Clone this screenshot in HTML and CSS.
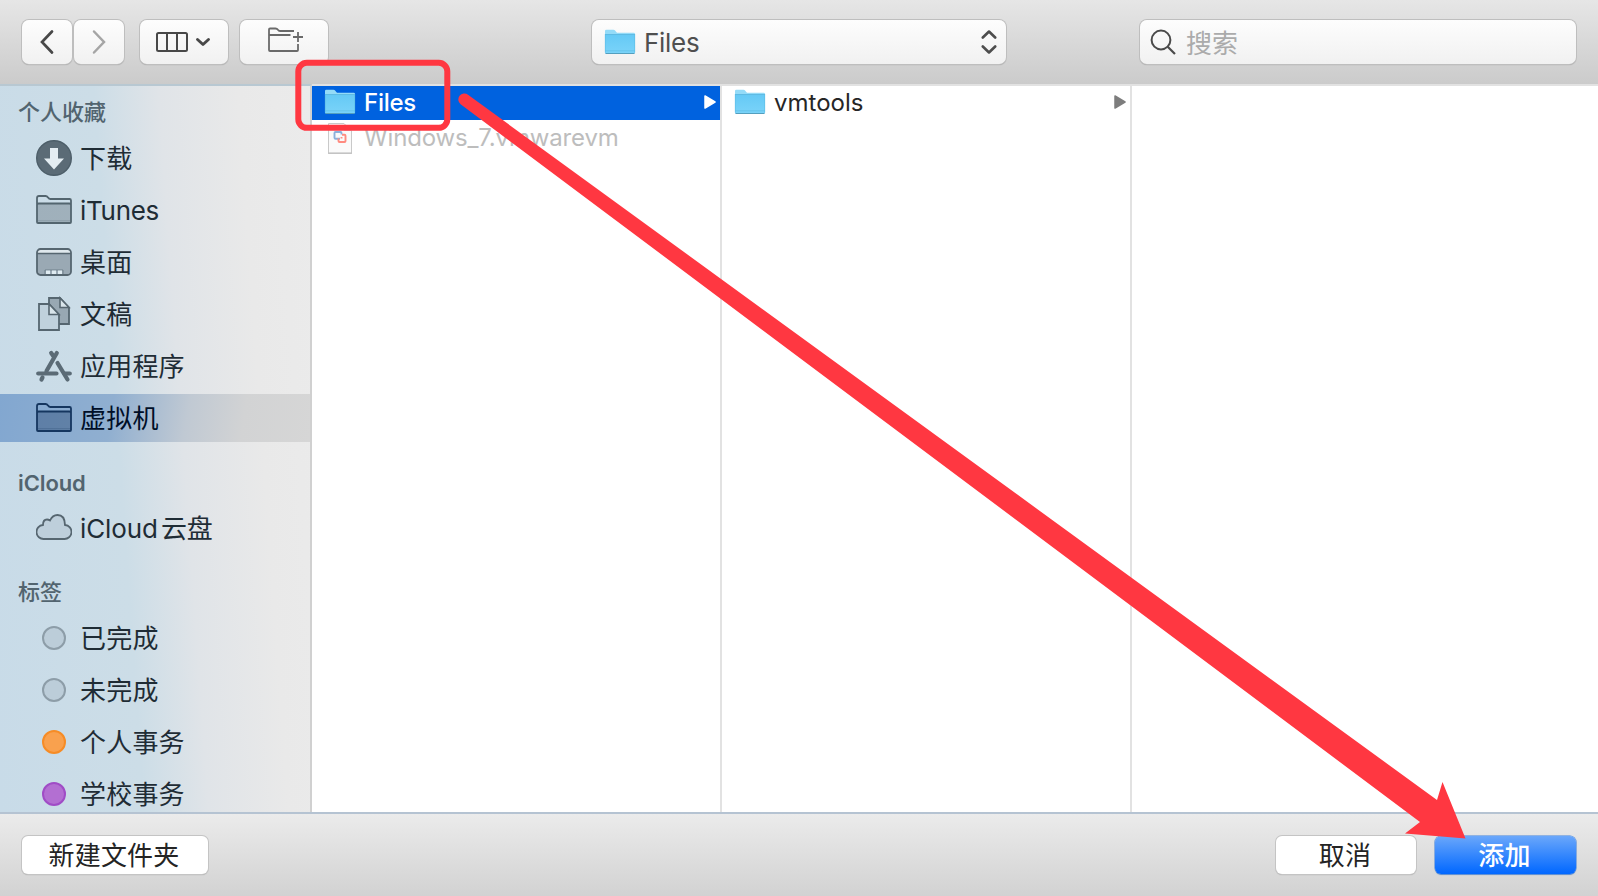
FILE: index.html
```html
<!DOCTYPE html>
<html lang="zh-CN">
<head>
<meta charset="utf-8">
<title>Files</title>
<link rel="stylesheet" href="styles.css">
</head>
<body>
<svg class="defs" width="0" height="0">
  <defs>
    <linearGradient id="blue" x1="0" y1="0" x2="0" y2="1"><stop offset="0" stop-color="#65c9f5"/><stop offset="1" stop-color="#7ad3f9"/></linearGradient>
    <symbol id="folder" viewBox="0 0 32 26">
      <path d="M1 24V2Q1 .8 2.200 .8H9.500Q10.500 .8 11.300 1.800L12.500 3.200Q13 3.700 14 3.700H29.800Q31 3.700 31 5V24Z" fill="#94dbf8"/>
      <path d="M1 5.500H31V23.600Q31 24.500 30 24.500H2Q1 24.500 1 23.600Z" fill="url(#blue)"/>
      <path d="M1 5.500H31" stroke="#58b5de" stroke-width=".8"/>
      <path d="M1.300 5V23.500M30.700 5V23.500M1 21.800H31" stroke="#5dbbe3" stroke-width=".6"/>
      <path d="M1.500 24.500H30.500" stroke="#549fbe" stroke-width="1"/>
    </symbol>
    <symbol id="side-folder" viewBox="0 0 36 30">
      <path d="M1 9H35V28H1Z" fill="currentColor" opacity=".36"/>
      <path d="M1 27V3Q1 1 3 1H9.500Q11 1 12 2.500Q13 4 14.500 4H33.500Q35 4 35 5.500V27Q35 28 34 28H2Q1 28 1 27ZM1 10Q1 8.500 2.500 8.500H33.500Q35 8.500 35 10" fill="none" stroke="currentColor" stroke-width="1.800"/>
      <path d="M2 25.700H34" stroke="currentColor" stroke-width=".6" opacity=".4"/>
    </symbol>
  </defs>
</svg>
<div class="dialog">
  <header class="toolbar">
    <div class="nav">
      <button class="tool nav-btn"><svg width="16" height="26" viewBox="0 0 16 26"><path d="M13 2.500L3 13L13 23.500" fill="none" stroke="#484848" stroke-width="2.700" stroke-linecap="round"/></svg></button>
      <button class="tool nav-btn"><svg width="16" height="26" viewBox="0 0 16 26"><path d="M3 2.500L13 13L3 23.500" fill="none" stroke="#a5a5a5" stroke-width="2.500" stroke-linecap="round"/></svg></button>
    </div>
    <button class="tool view"><svg width="56" height="24" viewBox="0 0 56 24"><rect x="2" y="3" width="30" height="18" rx="1.500" fill="none" stroke="#484848" stroke-width="2"/><path d="M12 3V21M22 3V21" stroke="#484848" stroke-width="2"/><path d="M42.500 9.500L48 14.500L53.500 9.500" fill="none" stroke="#484848" stroke-width="2.900" stroke-linecap="round" stroke-linejoin="round"/></svg></button>
    <button class="tool create"><svg width="36" height="26" viewBox="0 0 36 26"><path d="M31 17V23Q31 24 30 24H3Q2 24 2 23V2.500Q2 1.500 3 1.500H8.500Q10 1.500 11 2.800Q12 4 13.500 4H27M2 8H23.500M31 5V15M26 10H36" fill="none" stroke="#6a6a6a" stroke-width="1.800"/></svg></button>
    <div class="tool popup">
      <svg width="32" height="26"><use href="#folder"/></svg>
      <span class="popup-name">Files</span>
      <svg class="updown" width="16" height="26" viewBox="0 0 16 26"><path d="M1.800 8.500L8 2.500L14.200 8.500M1.800 17.500L8 23.500L14.200 17.500" fill="none" stroke="#4d4d4d" stroke-width="2.600" stroke-linecap="round" stroke-linejoin="round"/></svg>
    </div>
    <div class="tool search">
      <svg width="27" height="27" viewBox="0 0 27 27"><circle cx="11" cy="11" r="9.400" fill="none" stroke="#4a4a4a" stroke-width="2"/><path d="M17.700 17.700L25 25" stroke="#4a4a4a" stroke-width="2.200"/></svg>
      <span>搜索</span>
    </div>
  </header>
  <main class="browser">
    <nav class="sidebar">
      <h2>个人收藏</h2>
      <ul>
        <li><svg width="36" height="36" viewBox="0 0 36 36"><circle cx="18" cy="18" r="17.300" fill="#5b6b76" stroke="#4d5e69" stroke-width="1.400"/><path d="M14 8H22V18.500H28L18 29.500L8 18.500H14Z" fill="#e4edf2"/></svg><span>下载</span></li>
        <li><svg width="36" height="30"><use href="#side-folder"/></svg><span class="latin">iTunes</span></li>
        <li><svg width="36" height="28" viewBox="0 0 36 28"><rect x="1" y="1" width="34" height="26" rx="3.500" fill="#dfe8ed"/><path d="M1 5H35V24Q35 27 32 27H4Q1 27 1 24Z" fill="#9aa9b4"/><path d="M1 5.500H35" stroke="#566670" stroke-width="1.600"/><rect x="1" y="1" width="34" height="26" rx="3.500" fill="none" stroke="#566670" stroke-width="1.800"/><path d="M9 26V22H27V26" fill="none" stroke="#71818c"/><path d="M10 22.500H14V26H10ZM16 22.500H20V26H16ZM22 22.500H26V26H22Z" fill="#dfebf1"/></svg><span>桌面</span></li>
        <li><svg width="36" height="36" viewBox="0 0 36 36"><path d="M13 2H24L33 11.500V28H13Z" fill="#98a8b3" stroke="#566670" stroke-width="1.800"/><path d="M24 2V11.500H33Z" fill="#d9e5eb" stroke="#566670" stroke-width="1.600"/><path d="M3 8H13L23 18.500V34H3Z" fill="#c0d1dc" stroke="#566670" stroke-width="1.800"/><path d="M13 8V18.500H23Z" fill="#d9e5eb" stroke="#566670" stroke-width="1.600"/></svg><span>文稿</span></li>
        <li><svg width="36" height="34" viewBox="0 0 36 34"><g fill="none" stroke="#5b6b76" stroke-width="4.200" stroke-linecap="round"><path d="M20.800 4L10.500 22M15.200 4L18 8M21.500 14L31.500 30.500M6.500 28.500L5.500 30.500"/><path d="M2.200 24.500H20.500M28.500 24.500H33.800"/></g></svg><span>应用程序</span></li>
        <li class="selected"><svg width="36" height="30"><use href="#side-folder"/></svg><span>虚拟机</span></li>
      </ul>
      <h2 class="latin">iCloud</h2>
      <ul>
        <li><svg width="36" height="26" viewBox="0 0 36 26"><path d="M8 25A7 7 0 0 1 7 11Q7 5.500 11 5.500Q12.500 5.500 14 6.500Q16.500 1 21.500 1Q28.800 1 29 11A7 7 0 0 1 28 25Z" fill="#becfdb" stroke="#566670" stroke-width="1.800"/></svg><span class="latin">iCloud<span class="drive">云盘</span></span></li>
      </ul>
      <h2 class="tags">标签</h2>
      <ul>
        <li><i class="dot"></i><span>已完成</span></li>
        <li><i class="dot"></i><span>未完成</span></li>
        <li><i class="dot orange"></i><span>个人事务</span></li>
        <li><i class="dot purple"></i><span>学校事务</span></li>
      </ul>
    </nav>
    <section class="column">
      <div class="entry active"><svg width="32" height="26"><use href="#folder"/></svg><span>Files</span><svg class="more" width="12" height="14" viewBox="0 0 12 14"><path d="M1 1L11 7L1 13Z" fill="#fff" stroke="#fff" stroke-width="1.500" stroke-linejoin="round"/></svg></div>
      <div class="entry disabled"><svg width="32" height="32" viewBox="0 0 32 32"><path d="M4.500 1.500H20L27.500 9V31H4.500Z" fill="#fafafa" stroke="#c9c9c9"/><path d="M20 1.500V9H27.500Z" fill="#ddd"/><path d="M4 31.300H28" stroke="#bbb"/><path d="M13 16.800H11.500Q10.500 16.800 10.500 15.800V11Q10.500 10 11.500 10H16.500Q17.500 10 17.500 11V12.500M13 16.800H16" fill="none" stroke="#8cb0db" stroke-width="1.900"/><path d="M18 12.800H20.500Q21.500 12.800 21.500 13.800V19Q21.500 20 20.500 20H15.500Q14.500 20 14.500 19V16.500M17.500 15V16.500" fill="none" stroke="#ff8b80" stroke-width="1.900"/></svg><span>Windows_7.vmwarevm</span></div>
    </section>
    <section class="column">
      <div class="entry"><svg width="32" height="26"><use href="#folder"/></svg><span>vmtools</span><svg class="more" width="12" height="14" viewBox="0 0 12 14"><path d="M1 1L11 7L1 13Z" fill="#7d7d7d" stroke="#7d7d7d" stroke-width="1.500" stroke-linejoin="round"/></svg></div>
    </section>
    <section class="column last"></section>
  </main>
  <footer class="actions">
    <button class="push new-folder">新建文件夹</button>
    <button class="push cancel">取消</button>
    <button class="push primary">添加</button>
  </footer>
  <svg class="annotation" width="1598" height="896" viewBox="0 0 1598 896">
    <rect x="298.300" y="62.800" width="149" height="65" rx="8.500" fill="none" stroke="#ff3741" stroke-width="6"/>
    <path d="M468 94.800L1437 800L1442.500 782L1465.500 838.500L1405 833.500L1420 822L460.600 104.200A5.600 5.600 0 0 1 468 94.800Z" fill="#ff3741"/>
  </svg>
</div>
</body>
</html>
```
FILE: styles.css
```css
* { box-sizing: border-box; }

body {
  margin: 0;
  font-family: Inter, "Noto Sans CJK SC", sans-serif;
  font-size: 26px;
  color: #262626;
}

.defs { position: absolute; }

svg { display: block; flex: none; }

.dialog {
  position: relative;
  display: flex;
  flex-direction: column;
  width: 1598px;
  height: 896px;
  overflow: hidden;
}

.toolbar {
  display: flex;
  align-items: flex-start;
  height: 84px;
  padding: 20px 22px 0;
  background: linear-gradient(#e6e6e6, #cbcbcb);
}

.tool {
  display: flex;
  align-items: center;
  justify-content: center;
  height: 44px;
  padding: 0;
  border: 0;
  border-radius: 7px;
  background: linear-gradient(#fdfdfd, #f1f1f1);
  box-shadow: 0 0 0 1px #bebebe, 0 1px 1px 0 #8e8e8e;
}

.nav { display: flex; gap: 2px; }
.nav-btn { width: 50px; }
.view { width: 88px; margin-left: 16px; padding-right: 2px; }
.create { width: 88px; margin-left: 12px; }
.create svg { margin: -4px 0 0 1px; }

.popup {
  width: 414px;
  margin-left: 264px;
  padding: 0 9px 0 12px;
  color: #4f4f4f;
}
.popup-name { flex: 1; margin-left: 8px; padding-top: 1px; letter-spacing: -.3px; }

.search {
  justify-content: flex-start;
  width: 436px;
  margin-left: 134px;
  padding-left: 10px;
  gap: 9px;
  color: #ababab;
}
.search span { padding-bottom: 2px; }

.browser {
  display: flex;
  height: 728px;
  border-top: 2px solid #e2e2e2;
}

.sidebar {
  width: 312px;
  margin-top: -2px;
  border-top: 2px solid #b8c8d2;
  border-right: 2px solid #d0d0d0;
  padding-top: 4px;
  overflow: hidden;
  color: #1f2c35;
  background: linear-gradient(86deg, #c8dbe8 0%, #ccdde7 40%, #e0e4e8 58%, #e9e9e9 80%, #ebebeb 100%);
}

.sidebar h2 {
  display: flex;
  align-items: center;
  height: 44px;
  margin: 0;
  padding: 0 0 4px 18px;
  font-size: 22px;
  font-weight: 500;
  color: #52646f;
}
.sidebar h2.latin { height: 40px; margin-top: 21px; padding-bottom: 0; font-weight: 600; letter-spacing: -.1px; }
.sidebar h2.tags { margin-top: 19px; }

.sidebar ul {
  display: flex;
  flex-direction: column;
  gap: 4px;
  margin: 0;
  padding: 0;
  list-style: none;
}

.sidebar li {
  display: flex;
  align-items: center;
  gap: 8px;
  height: 48px;
  padding-left: 36px;
  white-space: nowrap;
}
.sidebar li svg { color: #53656f; }
.sidebar li > span { padding-bottom: 3px; letter-spacing: .2px; }
.sidebar li > .latin { padding-bottom: 0; letter-spacing: -.3px; }
.sidebar li > .latin:has(.drive) { padding-bottom: 1px; letter-spacing: -.1px; }
.drive { margin-left: 3px; }

.sidebar li.selected {
  color: #000f28;
  background: linear-gradient(99deg, #82a7d0 0%, #90afd0 36%, #c0c9d3 60%, #d2d3d4 78%, #d6d6d6 100%);
}
.sidebar li.selected svg { color: #15365f; }

.dot {
  width: 24px;
  height: 24px;
  margin: 0 6px;
  border: 2px solid #8d9da8;
  border-radius: 50%;
  background: #bccdd9;
}
.dot.orange { border-color: #f68c26; background: #f9a14e; }
.dot.purple { border-color: #a04cc6; background: #b36fd2; }

.column {
  width: 410px;
  border-right: 2px solid #e2e2e2;
  background: #fff;
}
.column.last { flex: 1; border-right: 0; }

.entry {
  display: flex;
  align-items: center;
  height: 34px;
  padding: 0 4px 2px 12px;
  font-size: 24px;
}
.entry span { flex: 1; margin-left: 8px; }
.entry.active { color: #fff; background: #0062df; font-weight: 500; letter-spacing: -.25px; }
.entry.disabled { height: 36px; padding-bottom: 1px; color: #bdbdbd; letter-spacing: -.15px; }

.actions {
  display: flex;
  height: 84px;
  padding: 22px 22px 0 22px;
  border-top: 2px solid #b5c3d2;
  background: linear-gradient(#ebebeb, #d2d2d2);
}

.push {
  height: 38px;
  padding: 0 2px 0 0;
  border: 0;
  border-radius: 6px;
  font: inherit;
  letter-spacing: .2px;
  line-height: 39px;
  color: #242424;
  background: #fff;
  box-shadow: 0 0 0 1px #c4c4c4, 0 1px 1px 0 #999;
}
.new-folder { width: 186px; }
.cancel { width: 140px; margin-left: auto; }
.primary {
  width: 141px;
  margin-left: 19px;
  font-weight: 500;
  color: #fff;
  background: linear-gradient(#6aa7fb, #0067ff);
  box-shadow: 0 0 0 .5px #3c80dd, 0 1px 1px 0 #7a9cca;
}

.annotation { position: absolute; top: 0; left: 0; pointer-events: none; }
```
